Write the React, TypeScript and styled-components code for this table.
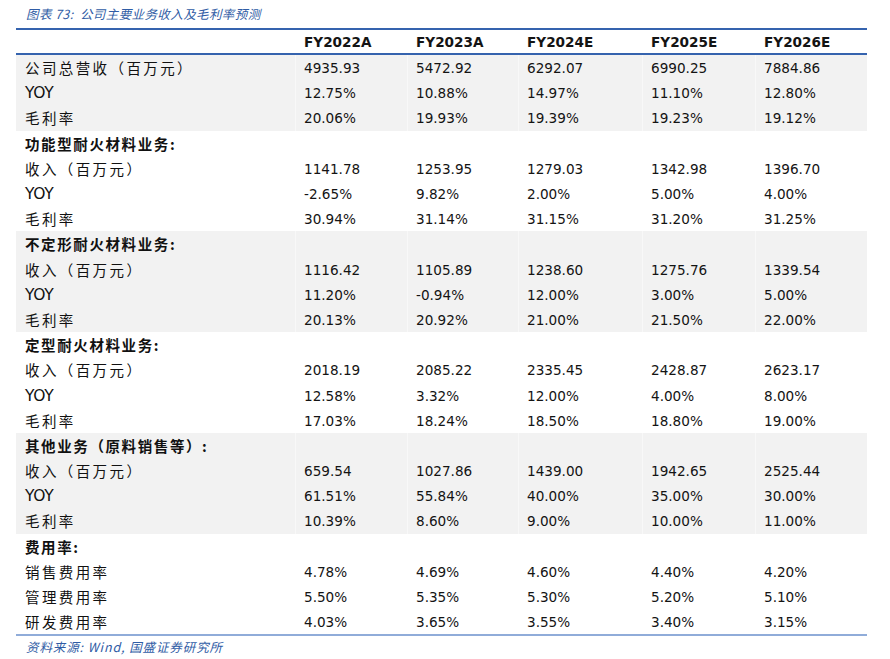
import styled, { createGlobalStyle } from 'styled-components';

const GlobalStyle = createGlobalStyle`
  body {
    margin: 0;
    background: #ffffff;
    color: #111111;
    font-family: 'DejaVu Sans', 'Noto Sans CJK SC', sans-serif;
  }
`;

const COLS = '279px 112px 111px 124px 113px 112px';

const Page = styled.div`
  width: 890px;
  height: 659px;
  padding-left: 16px;
  box-sizing: border-box;
  overflow: hidden;
`;

const Caption = styled.div`
  height: 29px;
  padding-left: 10px;
  display: flex;
  align-items: center;
  font-family: 'Noto Sans CJK SC', sans-serif;
  font-style: italic;
  font-size: 12.5px;
  letter-spacing: 0.4px;
  color: #2f5ca5;
  margin-top: -1px;
`;

const Table = styled.div`
  width: 851px;
  border-top: 2px solid #3563ae;
  border-bottom: 2px solid #90acd9;
`;

const HeaderRow = styled.div`
  display: grid;
  grid-template-columns: ${COLS};
  height: 23px;
  align-items: center;
  border-bottom: 2px solid #3563ae;
`;

const Row = styled.div<{ $shaded: boolean }>`
  display: grid;
  grid-template-columns: ${COLS};
  height: 25.2px;
  align-items: center;
  background: ${p => (p.$shaded ? '#f2f2f2' : '#ffffff')};
`;

const Cell = styled.div<{ $shaded?: boolean }>`
  height: 100%;
  display: flex;
  align-items: center;
  padding-left: 8px;
  padding-top: 1px;
  box-sizing: border-box;
  font-size: 13.6px;
  color: #141414;
  border-left: 1px solid ${p => (p.$shaded ? '#f8f8f8' : 'transparent')};
`;

const HeadCell = styled(Cell)`
  font-weight: bold;
  padding-top: 1px;
`;

const Label = styled.div<{ $bold?: boolean; $latin?: boolean }>`
  height: 100%;
  display: flex;
  align-items: center;
  padding-left: 9px;
  padding-top: ${p => (p.$latin ? '1px' : '0')};
  box-sizing: border-box;
  font-family: ${p => (p.$latin ? "'DejaVu Sans', sans-serif" : "'Noto Sans CJK SC', sans-serif")};
  font-size: ${p => (p.$latin ? '15.5px' : '14.5px')};
  font-weight: ${p => (p.$bold ? 700 : 400)};
  letter-spacing: ${p => (p.$latin ? '-0.3px' : p.$bold ? '1.6px' : '2.4px')};
  color: #111111;
`;

const Source = styled.div`
  padding-left: 10px;
  height: 20px;
  display: flex;
  align-items: center;
  font-family: 'Noto Sans CJK SC', sans-serif;
  font-style: italic;
  font-size: 12.5px;
  letter-spacing: 0.9px;
  color: #2f5ca5;
`;

type Line = { label: string; bold?: boolean; values?: string[] };

const years = ['FY2022A', 'FY2023A', 'FY2024E', 'FY2025E', 'FY2026E'];

const blocks: Line[][] = [
  [
    { label: '公司总营收（百万元）', values: ['4935.93', '5472.92', '6292.07', '6990.25', '7884.86'] },
    { label: 'YOY', values: ['12.75%', '10.88%', '14.97%', '11.10%', '12.80%'] },
    { label: '毛利率', values: ['20.06%', '19.93%', '19.39%', '19.23%', '19.12%'] },
  ],
  [
    { label: '功能型耐火材料业务:', bold: true },
    { label: '收入（百万元）', values: ['1141.78', '1253.95', '1279.03', '1342.98', '1396.70'] },
    { label: 'YOY', values: ['-2.65%', '9.82%', '2.00%', '5.00%', '4.00%'] },
    { label: '毛利率', values: ['30.94%', '31.14%', '31.15%', '31.20%', '31.25%'] },
  ],
  [
    { label: '不定形耐火材料业务:', bold: true },
    { label: '收入（百万元）', values: ['1116.42', '1105.89', '1238.60', '1275.76', '1339.54'] },
    { label: 'YOY', values: ['11.20%', '-0.94%', '12.00%', '3.00%', '5.00%'] },
    { label: '毛利率', values: ['20.13%', '20.92%', '21.00%', '21.50%', '22.00%'] },
  ],
  [
    { label: '定型耐火材料业务:', bold: true },
    { label: '收入（百万元）', values: ['2018.19', '2085.22', '2335.45', '2428.87', '2623.17'] },
    { label: 'YOY', values: ['12.58%', '3.32%', '12.00%', '4.00%', '8.00%'] },
    { label: '毛利率', values: ['17.03%', '18.24%', '18.50%', '18.80%', '19.00%'] },
  ],
  [
    { label: '其他业务（原料销售等）:', bold: true },
    { label: '收入（百万元）', values: ['659.54', '1027.86', '1439.00', '1942.65', '2525.44'] },
    { label: 'YOY', values: ['61.51%', '55.84%', '40.00%', '35.00%', '30.00%'] },
    { label: '毛利率', values: ['10.39%', '8.60%', '9.00%', '10.00%', '11.00%'] },
  ],
  [
    { label: '费用率:', bold: true },
    { label: '销售费用率', values: ['4.78%', '4.69%', '4.60%', '4.40%', '4.20%'] },
    { label: '管理费用率', values: ['5.50%', '5.35%', '5.30%', '5.20%', '5.10%'] },
    { label: '研发费用率', values: ['4.03%', '3.65%', '3.55%', '3.40%', '3.15%'] },
  ],
];

export default function App() {
  return (
    <>
      <GlobalStyle />
      <Page>
        <Caption>图表 73:&nbsp; 公司主要业务收入及毛利率预测</Caption>
        <Table>
          <HeaderRow>
            <Cell />
            {years.map(y => (
              <HeadCell key={y}>{y}</HeadCell>
            ))}
          </HeaderRow>
          {blocks.map((block, bi) =>
            block.map((line, li) => {
              const shaded = bi % 2 === 0;
              return (
                <Row key={`${bi}-${li}`} $shaded={shaded}>
                  <Label $bold={line.bold} $latin={line.label === 'YOY'}>
                    {line.label}
                  </Label>
                  {(line.values || ['', '', '', '', '']).map((v, i) => (
                    <Cell key={i} $shaded={shaded}>
                      {v}
                    </Cell>
                  ))}
                </Row>
              );
            })
          )}
        </Table>
        <Source>资料来源: Wind, 国盛证券研究所</Source>
      </Page>
    </>
  );
}
